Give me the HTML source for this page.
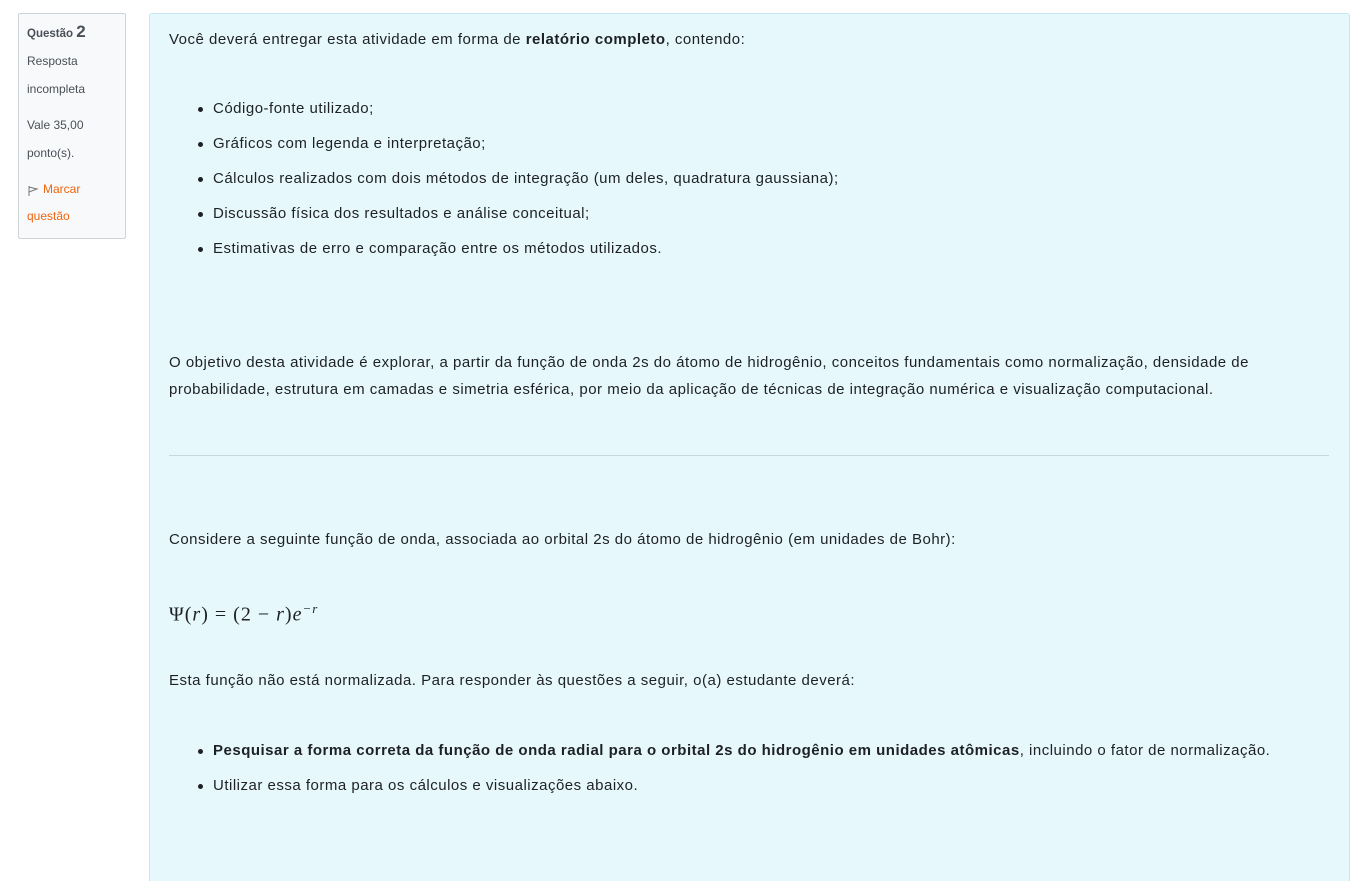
<!DOCTYPE html>
<html><head><meta charset="utf-8"><style>
html,body{margin:0;width:1371px;height:881px;overflow:hidden}
body{background:#fff;font-family:"Liberation Sans",sans-serif;color:#1d2125;position:relative}
.side{position:absolute;left:18px;top:13px;width:106px;height:224px;background:#f8f9fa;border:1px solid #cfd4d9;border-radius:2px;font-size:12px;color:#495057}
.side div{position:absolute;left:8px;white-space:nowrap}
.main{position:absolute;left:149px;top:13px;width:1199px;height:900px;background:#e7f8fd;border:1px solid #c5e8f3;border-radius:3px}
.t{position:absolute;left:169px;font-size:15px;letter-spacing:0.5px;white-space:nowrap;line-height:20px}
.b{position:absolute;left:198px;width:5px;height:5px;border-radius:50%;background:#1d2125}
</style></head><body>
<div class="side">
<div style="top:8px;font-weight:bold;font-size:11.5px">Questão <span style="font-size:17px">2</span></div>
<div style="top:40px">Resposta</div>
<div style="top:68px">incompleta</div>
<div style="top:104px">Vale 35,00</div>
<div style="top:132px">ponto(s).</div>
<div style="top:168px;color:#f0650e"><svg width="12" height="12" viewBox="0 0 12 12" style="vertical-align:-4px;margin-right:4px"><path d="M2 1V11M2 2L10 4L2 7" fill="none" stroke="#777" stroke-width="1"/></svg>Marcar</div>
<div style="top:195px;color:#f0650e">questão</div>
</div>
<div class="main"></div>
<div class="t" style="top:30px">Você deverá entregar esta atividade em forma de <b>relatório completo</b>, contendo:</div>
<div class="b" style="top:107px"></div><div class="t" style="left:213px;top:99px">Código-fonte utilizado;</div>
<div class="b" style="top:142px"></div><div class="t" style="left:213px;top:134px">Gráficos com legenda e interpretação;</div>
<div class="b" style="top:177px"></div><div class="t" style="left:213px;top:169px">Cálculos realizados com dois métodos de integração (um deles, quadratura gaussiana);</div>
<div class="b" style="top:212px"></div><div class="t" style="left:213px;top:204px">Discussão física dos resultados e análise conceitual;</div>
<div class="b" style="top:247px"></div><div class="t" style="left:213px;top:239px">Estimativas de erro e comparação entre os métodos utilizados.</div>
<div class="t" style="top:353px">O objetivo desta atividade é explorar, a partir da função de onda 2s do átomo de hidrogênio, conceitos fundamentais como normalização, densidade de</div>
<div class="t" style="top:380px">probabilidade, estrutura em camadas e simetria esférica, por meio da aplicação de técnicas de integração numérica e visualização computacional.</div>
<div style="position:absolute;left:169px;top:455px;width:1160px;height:1px;background:#c9d6dc"></div>
<div class="t" style="top:530px">Considere a seguinte função de onda, associada ao orbital 2s do átomo de hidrogênio (em unidades de Bohr):</div>
<div class="t" style="top:597px;font-family:'Liberation Serif',serif;font-size:20px;letter-spacing:1px;line-height:24px">Ψ(<i>r</i>) = (2 − <i>r</i>)<i>e</i><sup style="font-size:13px"><i>−r</i></sup></div>
<div class="t" style="top:671px">Esta função não está normalizada. Para responder às questões a seguir, o(a) estudante deverá:</div>
<div class="b" style="top:749px"></div><div class="t" style="left:213px;top:741px"><b>Pesquisar a forma correta da função de onda radial para o orbital 2s do hidrogênio em unidades atômicas</b>, incluindo o fator de normalização.</div>
<div class="b" style="top:784px"></div><div class="t" style="left:213px;top:776px">Utilizar essa forma para os cálculos e visualizações abaixo.</div>
</body></html>
